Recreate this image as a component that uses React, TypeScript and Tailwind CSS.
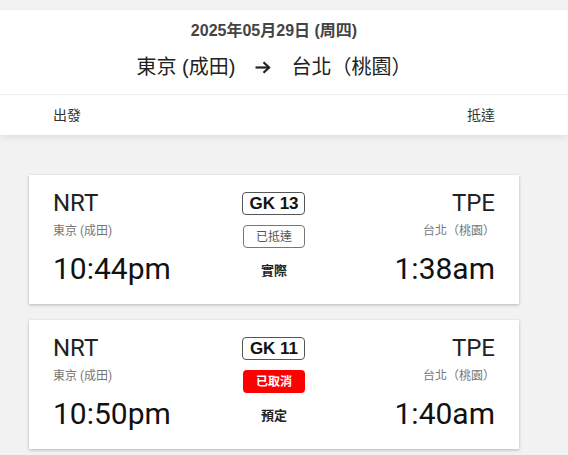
import React from 'react';

type Flight = {
  from: string;
  fromCity: string;
  to: string;
  toCity: string;
  flightNo: string;
  status: string;
  cancelled: boolean;
  depTime: string;
  arrTime: string;
  timeLabel: string;
};

const FLIGHTS: Flight[] = [
  {
    from: 'NRT',
    fromCity: '東京 (成田)',
    to: 'TPE',
    toCity: '台北（桃園）',
    flightNo: 'GK 13',
    status: '已抵達',
    cancelled: false,
    depTime: '10:44pm',
    arrTime: '1:38am',
    timeLabel: '實際',
  },
  {
    from: 'NRT',
    fromCity: '東京 (成田)',
    to: 'TPE',
    toCity: '台北（桃園）',
    flightNo: 'GK 11',
    status: '已取消',
    cancelled: true,
    depTime: '10:50pm',
    arrTime: '1:40am',
    timeLabel: '預定',
  },
];

const SANS = "font-['Liberation_Sans','Noto_Sans_CJK_TC',sans-serif]";
const ROBOTO = "font-['Roboto','Noto_Sans_CJK_TC',sans-serif]";

function ArrowIcon() {
  return (
    <svg width="16" height="13" viewBox="0 0 16 13" fill="none" className="mx-5">
      <path d="M0.5 6.5h13.5" stroke="#222" strokeWidth="2.2" />
      <path d="M8.5 1.2l5.6 5.3-5.6 5.3" stroke="#222" strokeWidth="2.2" strokeLinejoin="miter" />
    </svg>
  );
}

function FlightCard({ f }: { f: Flight }) {
  return (
    <div className={`bg-white shadow-[0_1px_3px_rgba(0,0,0,0.25)] px-6 pt-[14px] pb-[17px] grid grid-cols-3 ${ROBOTO}`}>
      <div className="flex flex-col items-start">
        <div className="text-[24px] leading-[28px] text-[#222]">{f.from}</div>
        <div className="mt-[6px] text-[12px] leading-4 text-[#777]">{f.fromCity}</div>
        <div className="mt-3 text-[30px] leading-9 text-[#111]">{f.depTime}</div>
      </div>

      <div className="flex flex-col items-center pt-[3px]">
        <div className={`w-[63px] h-[23px] border border-[#555] rounded flex items-center justify-center text-[17px] font-bold text-[#111] ${SANS}`}>
          {f.flightNo}
        </div>
        {f.cancelled ? (
          <div className={`mt-[10px] w-[62px] h-[23px] rounded bg-[#ff0000] flex items-center justify-center text-[12px] font-bold text-white ${SANS}`}>
            {f.status}
          </div>
        ) : (
          <div className={`mt-[10px] w-[62px] h-[23px] rounded border border-[#777] flex items-center justify-center text-[12px] text-[#555] ${SANS}`}>
            {f.status}
          </div>
        )}
        <div className={`mt-[15px] text-[13px] leading-4 font-bold text-[#222] ${SANS}`}>{f.timeLabel}</div>
      </div>

      <div className="flex flex-col items-end">
        <div className="text-[24px] leading-[28px] text-[#222]">{f.to}</div>
        <div className="mt-[6px] text-[12px] leading-4 text-[#777]">{f.toCity}</div>
        <div className="mt-3 text-[30px] leading-9 text-[#111]">{f.arrTime}</div>
      </div>
    </div>
  );
}

export default function App() {
  return (
    <div className="min-h-screen bg-[#f2f2f2] pt-[10px]">
      <div className="bg-white shadow-[0_3px_6px_rgba(0,0,0,0.07)]">
        <div className={`ml-[29px] w-[490px] pt-[10px] pb-[13px] flex flex-col items-center ${SANS}`}>
          <div className="text-[16px] leading-[21px] font-bold text-[#444]">2025年05月29日 (周四)</div>
          <div className="mt-3 flex items-center text-[20px] leading-[28px] text-[#222]">
            <span>東京 (成田)</span>
            <ArrowIcon />
            <span>台北（桃園）</span>
          </div>
        </div>
        <div className="h-px bg-[#eeeeee]" />
        <div className={`ml-[29px] w-[490px] px-6 pt-[10px] pb-[10px] flex justify-between text-[14px] leading-5 text-[#333] ${SANS}`}>
          <span>出發</span>
          <span>抵達</span>
        </div>
      </div>

      <div className="ml-[29px] w-[490px] mt-[40px] flex flex-col gap-4">
        {FLIGHTS.map(f => (
          <FlightCard key={f.flightNo} f={f} />
        ))}
      </div>
    </div>
  );
}
